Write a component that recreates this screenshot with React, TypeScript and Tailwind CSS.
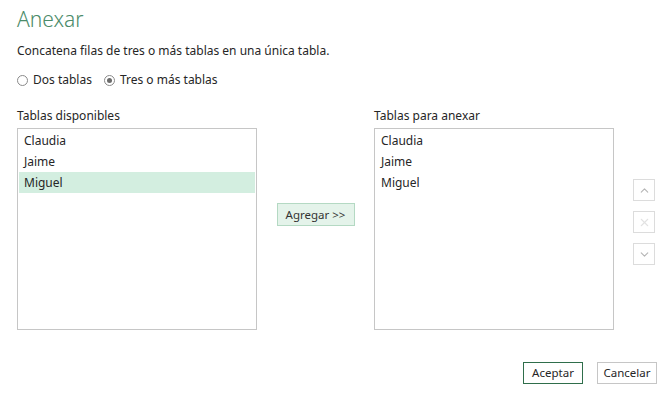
import { ChevronUp, ChevronDown, X } from "lucide-react";

const disponibles = ["Claudia", "Jaime", "Miguel"];
const paraAnexar = ["Claudia", "Jaime", "Miguel"];

function Radio({ label, checked }: { label: string; checked?: boolean }) {
  return (
    <label className="flex items-center gap-[5px]">
      <span className="flex h-[11px] w-[11px] items-center justify-center rounded-full border border-[#8a8a8a] bg-white">
        {checked && <span className="h-[5px] w-[5px] rounded-full bg-[#6b6b6b]" />}
      </span>
      <span>{label}</span>
    </label>
  );
}

function ListBox({ items, selected }: { items: string[]; selected?: number }) {
  return (
    <div className="h-[202px] w-[240px] shrink-0 border border-[#c6c6c6] bg-white p-[1px]">
      {items.map((item, i) => (
        <div
          key={item}
          className={
            i === selected
              ? "h-[21px] bg-[#d3eee0] pl-[5px] leading-[21px]"
              : "h-[21px] pl-[5px] leading-[21px]"
          }
        >
          {item}
        </div>
      ))}
    </div>
  );
}

function SideButton({ children }: { children: React.ReactNode }) {
  return (
    <button className="flex h-[22px] w-[22px] items-center justify-center border border-[#dcdcdc] bg-white">
      {children}
    </button>
  );
}

export default function App() {
  return (
    <div
      className="flex h-[396px] w-[668px] flex-col bg-white pl-[17px] pr-[11px] text-[12px] text-[#262626]"
      style={{ fontFamily: '"Noto Sans", "Open Sans", sans-serif' }}
    >
      <h1 className="mt-[5px] text-[21px] font-light leading-[28px] text-[#4b8b69]">Anexar</h1>
      <p className="mt-[9px] leading-[18px]">Concatena filas de tres o más tablas en una única tabla.</p>

      <div className="mt-[11px] flex items-center gap-[12px] leading-[18px]">
        <Radio label="Dos tablas" />
        <Radio label="Tres o más tablas" checked />
      </div>

      <div className="mt-[18px] flex">
        <div className="flex shrink-0 flex-col">
          <span className="mb-[3px] leading-[18px]">Tablas disponibles</span>
          <ListBox items={disponibles} selected={2} />
        </div>

        <div className="flex w-[117px] shrink-0 justify-center pt-[96px]">
          <button className="h-[23px] w-[78px] border border-[#b4d9c3] bg-[#e4f3ea] text-[11.5px] text-[#333]">
            Agregar &gt;&gt;
          </button>
        </div>

        <div className="flex shrink-0 flex-col">
          <span className="mb-[3px] leading-[18px]">Tablas para anexar</span>
          <ListBox items={paraAnexar} />
        </div>

        <div className="ml-[19px] flex shrink-0 flex-col gap-[10px] pt-[72px]">
          <SideButton>
            <ChevronUp className="h-[13px] w-[13px] text-[#b5b5b5]" strokeWidth={2} />
          </SideButton>
          <SideButton>
            <X className="h-[13px] w-[13px] text-[#e2e2e2]" strokeWidth={2} />
          </SideButton>
          <SideButton>
            <ChevronDown className="h-[13px] w-[13px] text-[#b5b5b5]" strokeWidth={2} />
          </SideButton>
        </div>
      </div>

      <div className="mt-[32px] flex justify-end gap-[14px]">
        <button className="h-[22px] w-[60px] border border-[#2f6e4b] bg-white text-[11.5px]">Aceptar</button>
        <button className="h-[22px] w-[60px] border border-[#c6c6c6] bg-white text-[11.5px]">Cancelar</button>
      </div>
    </div>
  );
}
